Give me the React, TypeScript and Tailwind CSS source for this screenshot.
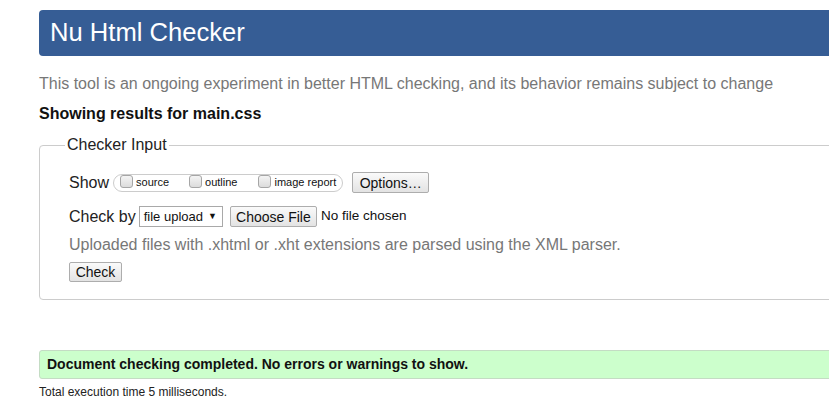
export default function App() {
  const font = { fontFamily: '"Liberation Sans", Arial, sans-serif' };
  const box = (
    <span className="inline-block w-[13px] h-[13px] rounded-[3px] border border-[#a6a6a6] bg-gradient-to-b from-[#f4f4f4] to-[#dcdcdc] mr-[3px] relative top-[-1px]" />
  );
  const btn =
    "border border-[#adadad] rounded-[2px] bg-gradient-to-b from-[#fafafa] to-[#e3e3e3] text-[#111] leading-none";

  return (
    <div className="w-[829px] h-[400px] overflow-hidden bg-white" style={font}>
      <div className="w-[900px] pl-[39px] pt-[10px]">
        <div className="h-[46px] bg-[#365d95] rounded-[4px] flex items-center pl-[11px]">
          <h1 className="text-white text-[25.6px] leading-none">Nu Html Checker</h1>
        </div>

        <p className="mt-[19px] text-[16px] leading-[18px] text-[#777]">
          This tool is an ongoing experiment in better HTML checking, and its behavior remains subject to change
        </p>
        <p className="mt-[12px] text-[16px] leading-[18px] font-bold text-[#111]">
          Showing results for main.css
        </p>

        <fieldset className="mt-[13px] border border-[#cccccc] rounded-[4px] px-0 pt-[18px] pb-[15px]">
          <legend className="ml-[25px] px-[2px] text-[16px] leading-[18px] text-[#222]">Checker Input</legend>

          <div className="pl-[29px]">
            <div className="flex items-center h-[21px]">
              <span className="text-[16px] text-[#222] mr-[4px]">Show</span>
              <span className="flex items-center h-[18px] border border-[#cccccc] rounded-full pl-[6px] pr-[6px] text-[11px] text-[#111]">
                {box}
                <span className="mr-[20px]">source</span>
                {box}
                <span className="mr-[21px]">outline</span>
                {box}
                <span>image report</span>
              </span>
              <button className={`${btn} ml-[9px] h-[21px] w-[77px] text-[14px]`}>Options…</button>
            </div>

            <div className="flex items-center h-[21px] mt-[13px]">
              <span className="text-[16px] text-[#222] mr-[3px]">Check by</span>
              <span className="flex items-center h-[21px] border border-[#a9a9a9] bg-white pl-[4px] pr-[5px] text-[13px] text-[#111]">
                file upload
                <span className="ml-[5px] text-[9px]">▼</span>
              </span>
              <button className={`${btn} ml-[7px] h-[21px] w-[87px] text-[14px]`}>Choose File</button>
              <span className="ml-[4px] text-[13.5px] text-[#111]">No file chosen</span>
            </div>

            <p className="mt-[9px] text-[16px] leading-[18px] text-[#777]">
              Uploaded files with .xhtml or .xht extensions are parsed using the XML parser.
            </p>

            <button className={`${btn} mt-[8px] h-[20px] w-[53px] text-[14px]`}>Check</button>
          </div>
        </fieldset>

        <div className="mt-[50px] h-[29px] bg-[#ccffcc] border border-[#c4dcc4] rounded-[3px] flex items-center pl-[7px]">
          <span className="text-[14px] font-bold text-[#111]">Document checking completed. No errors or warnings to show.</span>
        </div>
        <p className="mt-[6px] text-[12px] leading-[14px] text-[#222]">Total execution time 5 milliseconds.</p>
      </div>
    </div>
  );
}
